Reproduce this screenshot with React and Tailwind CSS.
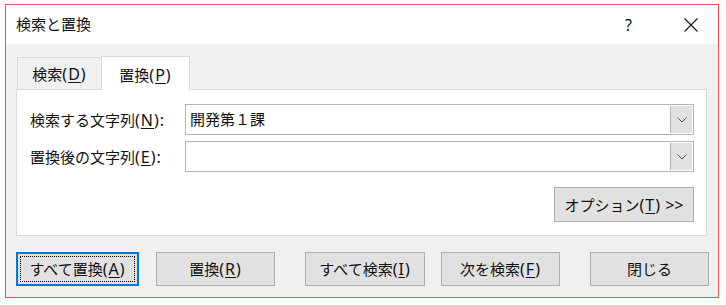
import React from "react";

function K({ k }) {
  return (
    <span className="text-[16px] tracking-[1px]">
      (<span className="underline underline-offset-[2px] decoration-1">{k}</span>)
    </span>
  );
}

function Combo({ value }) {
  return (
    <div className="flex h-[31px] w-[509px] border border-[#b4b4b4] bg-white">
      <div className="flex flex-1 items-center pl-[4px] text-[15px] leading-none">{value}</div>
      <div className="flex w-[22px] items-center justify-center border-l border-[#b4b4b4] bg-[#e1e1e1] m-[1px] ml-0">
        <svg width="10" height="6" viewBox="0 0 10 6">
          <polyline points="0.5,0.5 5,5 9.5,0.5" fill="none" stroke="#555" strokeWidth="1" />
        </svg>
      </div>
    </div>
  );
}

function Btn({ children, className = "", focused = false }) {
  if (focused) {
    return (
      <div className={"flex h-[34px] items-center justify-center border-2 border-[#0078d7] bg-[#e1e1e1] p-[2px] " + className}>
        <div className="flex h-full w-full items-center justify-center border border-dotted border-black text-[15px] leading-none">
          <span>{children}</span>
        </div>
      </div>
    );
  }
  return (
    <div className={"flex h-[34px] items-center justify-center border border-[#adadad] bg-[#e1e1e1] text-[15px] leading-none " + className}>
      <span>{children}</span>
    </div>
  );
}

export default function App() {
  return (
    <div className="h-[305px] w-[726px] bg-white pl-[5px] pt-[4px] font-['Noto_Sans','Noto_Sans_CJK_JP',sans-serif] text-[#111]">
      <div className="flex h-[294px] w-[714px] flex-col border border-[#e8505b]">
        {/* title bar */}
        <div className="flex h-[39px] items-center bg-white pl-[10px]">
          <span className="text-[15px] leading-none">検索と置換</span>
          <span className="ml-auto text-[16px] leading-none">?</span>
          <svg className="ml-[52px] mr-[20px]" width="14" height="14" viewBox="0 0 14 14">
            <path d="M0.5 0.5 L13.5 13.5 M13.5 0.5 L0.5 13.5" stroke="#111" strokeWidth="1.1" fill="none" />
          </svg>
        </div>
        {/* body */}
        <div className="flex flex-1 flex-col bg-[#f0f0f0] pt-[12px]">
          {/* tabs */}
          <div className="relative z-10 -mb-px flex items-end pl-[11px]">
            <div className="mb-px flex h-[32px] w-[84px] items-center justify-center border-l border-t border-[#d9d9d9] text-[15px] leading-none">
              <span>検索<K k="D" /></span>
            </div>
            <div className="flex h-[34px] w-[89px] items-center justify-center border-x border-t border-[#d9d9d9] bg-white pt-[2px] text-[15px] leading-none">
              <span>置換<K k="P" /></span>
            </div>
          </div>
          {/* panel */}
          <div className="ml-[10px] w-[691px] border border-[#d9d9d9] bg-white pl-[13px] pr-[12px] pt-[14px] pb-[13px]">
            <div className="flex items-center">
              <div className="w-[155px] text-[15px] leading-none">
                検索する文字列<K k="N" /><span className="text-[16px]">:</span>
              </div>
              <Combo value="開発第１課" />
            </div>
            <div className="mt-[6px] flex items-center">
              <div className="w-[155px] text-[15px] leading-none">
                置換後の文字列<K k="E" /><span className="text-[16px]">:</span>
              </div>
              <Combo value="" />
            </div>
            <div className="mt-[15px] flex justify-end">
              <div className="flex h-[35px] w-[140px] items-center justify-center border border-[#adadad] bg-[#e1e1e1] text-[15px] leading-none">
                <span>
                  オプション<K k="T" />
                  <span className="text-[16px]">&nbsp;&gt;&gt;</span>
                </span>
              </div>
            </div>
          </div>
          {/* buttons */}
          <div className="mt-[16px] flex pl-[10px]">
            <Btn focused className="w-[123px]">
              すべて置換<K k="A" />
            </Btn>
            <Btn className="ml-[17px] w-[119px]">
              置換<K k="R" />
            </Btn>
            <Btn className="ml-[30px] w-[120px]">
              すべて検索<K k="I" />
            </Btn>
            <Btn className="ml-[16px] w-[119px]">
              次を検索<K k="F" />
            </Btn>
            <Btn className="ml-[30px] w-[119px]">閉じる</Btn>
          </div>
        </div>
      </div>
    </div>
  );
}
